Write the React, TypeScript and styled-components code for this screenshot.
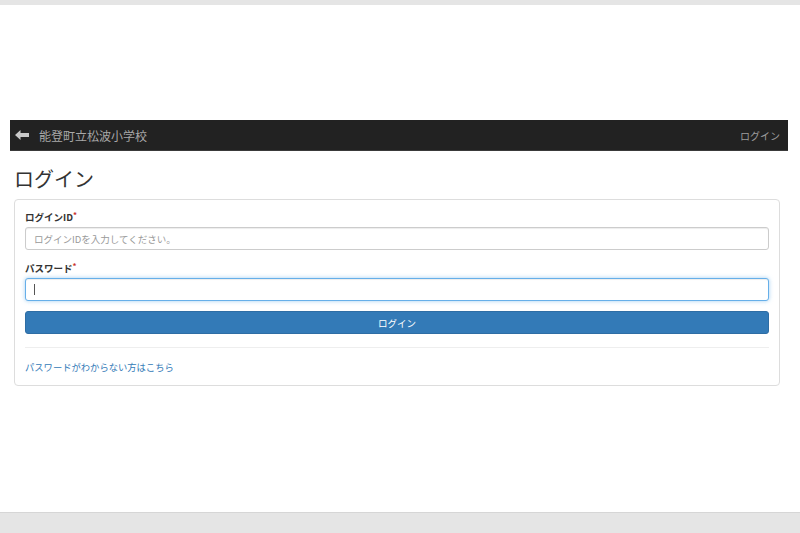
import styled, { createGlobalStyle } from 'styled-components'

const GlobalStyle = createGlobalStyle`
    html, body {
        margin: 0;
        padding: 0;
        background: #fff;
        font-family: 'Noto Sans CJK JP', 'Noto Sans', sans-serif;
        color: #333;
    }
    * {
        box-sizing: border-box;
    }
`

const App = () => {
    return (
        <>
            <GlobalStyle />
            <Frame>
                <TopBar />
                <Page>
                    <Navbar>
                        <Brand>
                            <BackIcon viewBox="0 0 14 10">
                                <path d="M0 5 L5.5 0 L5.5 3 L14 3 L14 7 L5.5 7 L5.5 10 Z" fill="#c8c8c8" />
                            </BackIcon>
                            <SchoolName>能登町立松波小学校</SchoolName>
                        </Brand>
                        <NavLink>ログイン</NavLink>
                    </Navbar>
                    <Content>
                        <Title>ログイン</Title>
                        <Panel>
                            <Field $space={11}>
                                <Label>
                                    ログインID<Required>*</Required>
                                </Label>
                                <Input placeholder="ログインIDを入力してください。" />
                            </Field>
                            <Field $space={10}>
                                <Label>
                                    パスワード<Required>*</Required>
                                </Label>
                                <Input type="password" $focused />
                            </Field>
                            <SubmitButton>ログイン</SubmitButton>
                            <Divider />
                            <ForgotLink href="#">パスワードがわからない方はこちら</ForgotLink>
                        </Panel>
                    </Content>
                </Page>
                <BottomBar />
            </Frame>
        </>
    )
}

const Frame = styled.div`
    display: flex;
    flex-direction: column;
    height: 533px;
    overflow: hidden;
`

const TopBar = styled.div`
    height: 5px;
    background: #e5e5e5;
    flex-shrink: 0;
`

const BottomBar = styled.div`
    height: 21px;
    background: #e5e5e5;
    border-top: 1px solid #d6d6d6;
    flex-shrink: 0;
`

const Page = styled.div`
    flex: 1;
    padding-top: 115px;
`

const Navbar = styled.div`
    margin: 0 12px 0 10px;
    height: 31px;
    background: #222;
    border-bottom: 1px solid #3a3a3a;
    display: flex;
    align-items: center;
    justify-content: space-between;
    padding: 0 8px 0 5px;
`

const Brand = styled.div`
    display: flex;
    align-items: center;
    gap: 10px;
`

const BackIcon = styled.svg`
    width: 14px;
    height: 10px;
`

const SchoolName = styled.span`
    font-size: 12px;
    color: #a8a8a8;
`

const NavLink = styled.span`
    font-size: 10px;
    color: #9d9d9d;
`

const Content = styled.div`
    padding: 0 20px 0 14px;
`

const Title = styled.h1`
    margin: 14px 0 6px;
    font-size: 20px;
    font-weight: 400;
    line-height: 28px;
    color: #333;
`

const Panel = styled.div`
    border: 1px solid #ddd;
    border-radius: 4px;
    padding: 10px 10px 8px;
    display: flex;
    flex-direction: column;
`

const Field = styled.div<{ $space: number }>`
    display: flex;
    flex-direction: column;
    margin-bottom: ${(p) => p.$space}px;
`

const Label = styled.label`
    font-size: 9.5px;
    font-weight: 700;
    color: #333;
    line-height: 14px;
    margin-bottom: 3px;
`

const Required = styled.span`
    color: #c9302c;
    font-size: 8px;
    vertical-align: top;
    position: relative;
    top: -2px;
`

const Input = styled.input<{ $focused?: boolean }>`
    height: 23px;
    border: 1px solid ${(p) => (p.$focused ? '#66afe9' : '#ccc')};
    border-radius: 3px;
    padding: 0 8px;
    font-family: inherit;
    font-size: 9.5px;
    color: #555;
    outline: none;
    box-shadow: ${(p) =>
        p.$focused ? 'inset 0 1px 1px rgba(0,0,0,.075), 0 0 4px rgba(102,175,233,.6)' : 'inset 0 1px 1px rgba(0,0,0,.075)'};
    &::placeholder {
        color: #999;
    }
    ${(p) =>
        p.$focused &&
        `
        background: linear-gradient(#555, #555) 8px 50% / 1px 11px no-repeat, #fff;
    `}
`

const SubmitButton = styled.button`
    height: 23px;
    background: #337ab7;
    border: 1px solid #2e6da4;
    border-radius: 3px;
    color: #fff;
    font-family: inherit;
    font-size: 9.5px;
    cursor: pointer;
`

const Divider = styled.hr`
    border: 0;
    border-top: 1px solid #eee;
    margin: 13px 0 12px;
    width: 100%;
`

const ForgotLink = styled.a`
    font-size: 9.3px;
    color: #337ab7;
    text-decoration: none;
    line-height: 14px;
    margin-bottom: 3px;
`

export default App
